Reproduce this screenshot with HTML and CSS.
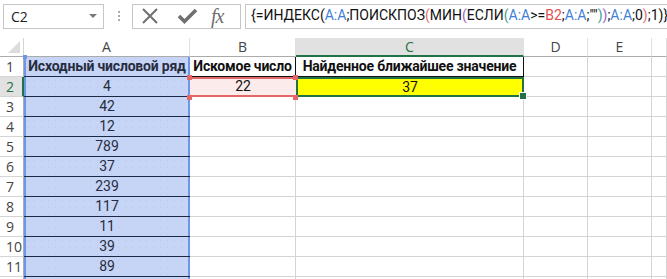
FILE: index.html
```html
<!DOCTYPE html>
<html lang="ru">
<head>
  <meta charset="UTF-8">
  <title>Книга1 - Excel</title>
  <link rel="stylesheet" href="styles.css">
</head>
<body>
  <div class="formula-bar">
    <div class="name-box">
      <span>C2</span>
      <span class="drop-arrow"></span>
    </div>
    <div class="grip">
      <i></i><i></i><i></i>
    </div>
    <div class="fx-buttons">
      <svg class="icon-x" width="18" height="18" viewBox="0 0 18 18">
        <path d="M2 2 L16 16 M16 2 L2 16" stroke="#6f6f6f" stroke-width="2" fill="none"/>
      </svg>
      <svg class="icon-ok" width="22" height="18" viewBox="0 0 22 18">
        <path d="M3 9 L8.5 14.5 L20 3" stroke="#6f6f6f" stroke-width="3.6" fill="none"/>
      </svg>
      <span class="icon-fx">fx</span>
    </div>
    <div class="formula-input">
      <span class="c-dark">{=ИНДЕКС(</span><span class="c-blue">A:A</span><span class="c-dark">;ПОИСКПОЗ</span><span class="c-pink">(</span><span class="c-dark">МИН</span><span class="c-purple">(</span><span class="c-dark">ЕСЛИ</span><span class="c-green">(</span><span class="c-blue">A:A</span><span class="c-dark">&gt;=</span><span class="c-red">B2</span><span class="c-dark">;</span><span class="c-blue">A:A</span><span class="c-dark">;""</span><span class="c-green">)</span><span class="c-purple">)</span><span class="c-dark">;</span><span class="c-blue">A:A</span><span class="c-dark">;0</span><span class="c-pink">)</span><span class="c-dark">;1)}</span>
    </div>
  </div>

  <div class="sheet">
    <div class="corner"><span class="corner-tri"></span></div>
    <div class="col-head">A</div>
    <div class="col-head">B</div>
    <div class="col-head active">C</div>
    <div class="col-head">D</div>
    <div class="col-head">E</div>
    <div class="col-head"></div>

    <div class="row-head">1</div>
    <div class="cell range first bold">Исходный числовой ряд</div>
    <div class="cell boxed bold">Искомое число</div>
    <div class="cell boxed bold">Найденное ближайшее значение</div>
    <div class="cell"></div>
    <div class="cell"></div>
    <div class="cell"></div>

    <div class="row-head active">2</div>
    <div class="cell range">4</div>
    <div class="cell ref">22</div>
    <div class="cell current">37</div>
    <div class="cell"></div>
    <div class="cell"></div>
    <div class="cell"></div>
  </div>

  <script>
    // remaining values of the source range, rows 3..11 (+ the edge of row 12)
    const values = [42, 12, 789, 37, 239, 117, 11, 39, 89];
    const sheet = document.querySelector('.sheet');

    values.concat(['']).forEach((val, i) => {
      const label = i < values.length ? i + 3 : '';
      const row = [];
      row.push('<div class="row-head">' + label + '</div>');
      row.push('<div class="cell range">' + val + '</div>');
      for (let c = 0; c < 5; c++) row.push('<div class="cell"></div>');
      sheet.insertAdjacentHTML('beforeend', row.join(''));
    });
  </script>
</body>
</html>
```

FILE: styles.css
```css
html, body {
  overflow: hidden;
}
body {
  margin: 0;
  background: #fff;
  font-family: Roboto, "Liberation Sans", sans-serif;
  width: 667px;
  height: 279px;
}
.formula-bar {
  display: flex;
  align-items: center;
  height: 30px;
  padding: 2px 0 0 3px;
  box-sizing: border-box;
  margin-bottom: 8px;
}
.name-box {
  width: 101px;
  height: 25px;
  box-sizing: border-box;
  border: 1px solid #c6c6c6;
  display: flex;
  align-items: center;
  justify-content: space-between;
  padding: 0 6px 0 7px;
  font-family: "Open Sans", sans-serif;
  font-size: 14px;
  color: #222;
}
.drop-arrow {
  width: 0;
  height: 0;
  border-left: 4px solid transparent;
  border-right: 4px solid transparent;
  border-top: 4px solid #777;
}
.grip {
  display: flex;
  flex-direction: column;
  gap: 2px;
  margin: 0 12px 0 14px;
}
.grip i {
  width: 2px;
  height: 2px;
  background: #aaa;
}
.fx-buttons {
  width: 109px;
  height: 25px;
  box-sizing: border-box;
  border: 1px solid #c6c6c6;
  display: flex;
  align-items: center;
  padding: 0 0 0 8px;
}
.icon-x { margin-right: 17px; }
.icon-ok { margin-right: 13px; }
.icon-fx {
  font-family: "Liberation Serif", serif;
  font-style: italic;
  font-size: 20px;
  color: #6f6f6f;
  letter-spacing: -1px;
}
.formula-input {
  flex: 1;
  height: 25px;
  margin-left: 4px;
  box-sizing: border-box;
  border: 1px solid #c6c6c6;
  border-right: none;
  padding: 2px 0 0 5px;
  font-family: Roboto, sans-serif;
  font-size: 14px;
  white-space: nowrap;
  overflow: hidden;
}
.c-dark { color: #111; }
.c-blue { color: #3f7fd8; }
.c-red { color: #e0504f; }
.c-pink { color: #e46d6d; }
.c-purple { color: #9a63c9; }
.c-green { color: #3fa08a; }

.sheet {
  display: grid;
  grid-template-columns: 24px 166px 106px 228px 64px 64px 1fr;
  grid-template-rows: 19px;
  grid-auto-rows: 20px;
  font-size: 14px;
}
.corner {
  position: relative;
  border-right: 1px solid #d4d4d4;
  border-bottom: 1px solid #ababab;
}
.corner-tri {
  position: absolute;
  right: 3px;
  bottom: 3px;
  width: 0;
  height: 0;
  border-left: 12px solid transparent;
  border-bottom: 12px solid #dcdcdc;
}
.col-head {
  border-right: 1px solid #e0e0e0;
  border-bottom: 1px solid #ababab;
  text-align: center;
  color: #444;
  font-family: "Open Sans", sans-serif;
  font-size: 14px;
  line-height: 18px;
}
.col-head.active {
  background: #e1e1e1;
  color: #217346;
  border-bottom: 2px solid #217346;
}
.row-head {
  border-right: 1px solid #ababab;
  border-bottom: 1px solid #d4d4d4;
  color: #444;
  font-family: "Open Sans", sans-serif;
  font-size: 14px;
  line-height: 19px;
  padding-left: 6px;
}
.row-head.active {
  background: #e1e1e1;
  color: #217346;
  border-right: 2px solid #217346;
}
.cell {
  border-right: 1px solid #d4d4d4;
  border-bottom: 1px solid #d4d4d4;
  text-align: center;
  line-height: 19px;
  color: #111;
  white-space: nowrap;
  position: relative;
}
.bold {
  font-weight: bold;
  letter-spacing: -0.2px;
}
.range {
  background-color: #c6d4f6;
  background-image: radial-gradient(#b9c7ec 0.5px, transparent 0.8px);
  background-size: 7px 7px;
  border-bottom: 1px solid #1d2746;
  border-right: none;
  box-shadow: inset 2px 0 #6f95e6, inset -2px 0 #6f95e6;
  color: #262d40;
}
.range.first::before {
  content: "";
  position: absolute;
  left: -1px;
  top: -2px;
  width: 4px;
  height: 4px;
  background: #6f95e6;
}
.boxed {
  border-right: 1px solid #111;
  border-bottom: 1px solid #111;
}
.ref {
  background: #fcebeb;
  box-shadow: inset 0 2px #e46666, inset 0 -2px #e46666;
  border-right: none;
  border-bottom: none;
}
/* the four corner handles of the referenced cell */
.ref::before {
  content: "";
  position: absolute;
  z-index: 2;
  left: -3px;
  top: -2px;
  width: 5px;
  height: 5px;
  background: #e46666;
  box-shadow: 106px 0 #e46666, 0 20px #e46666, 106px 20px #e46666;
}
.current {
  background: #ffff00;
  border: 2px solid #217346;
  line-height: 16px;
}
.current::after {
  content: "";
  position: absolute;
  z-index: 3;
  right: -5px;
  bottom: -5px;
  width: 6px;
  height: 6px;
  background: #217346;
  border: 1px solid #fff;
}
```
